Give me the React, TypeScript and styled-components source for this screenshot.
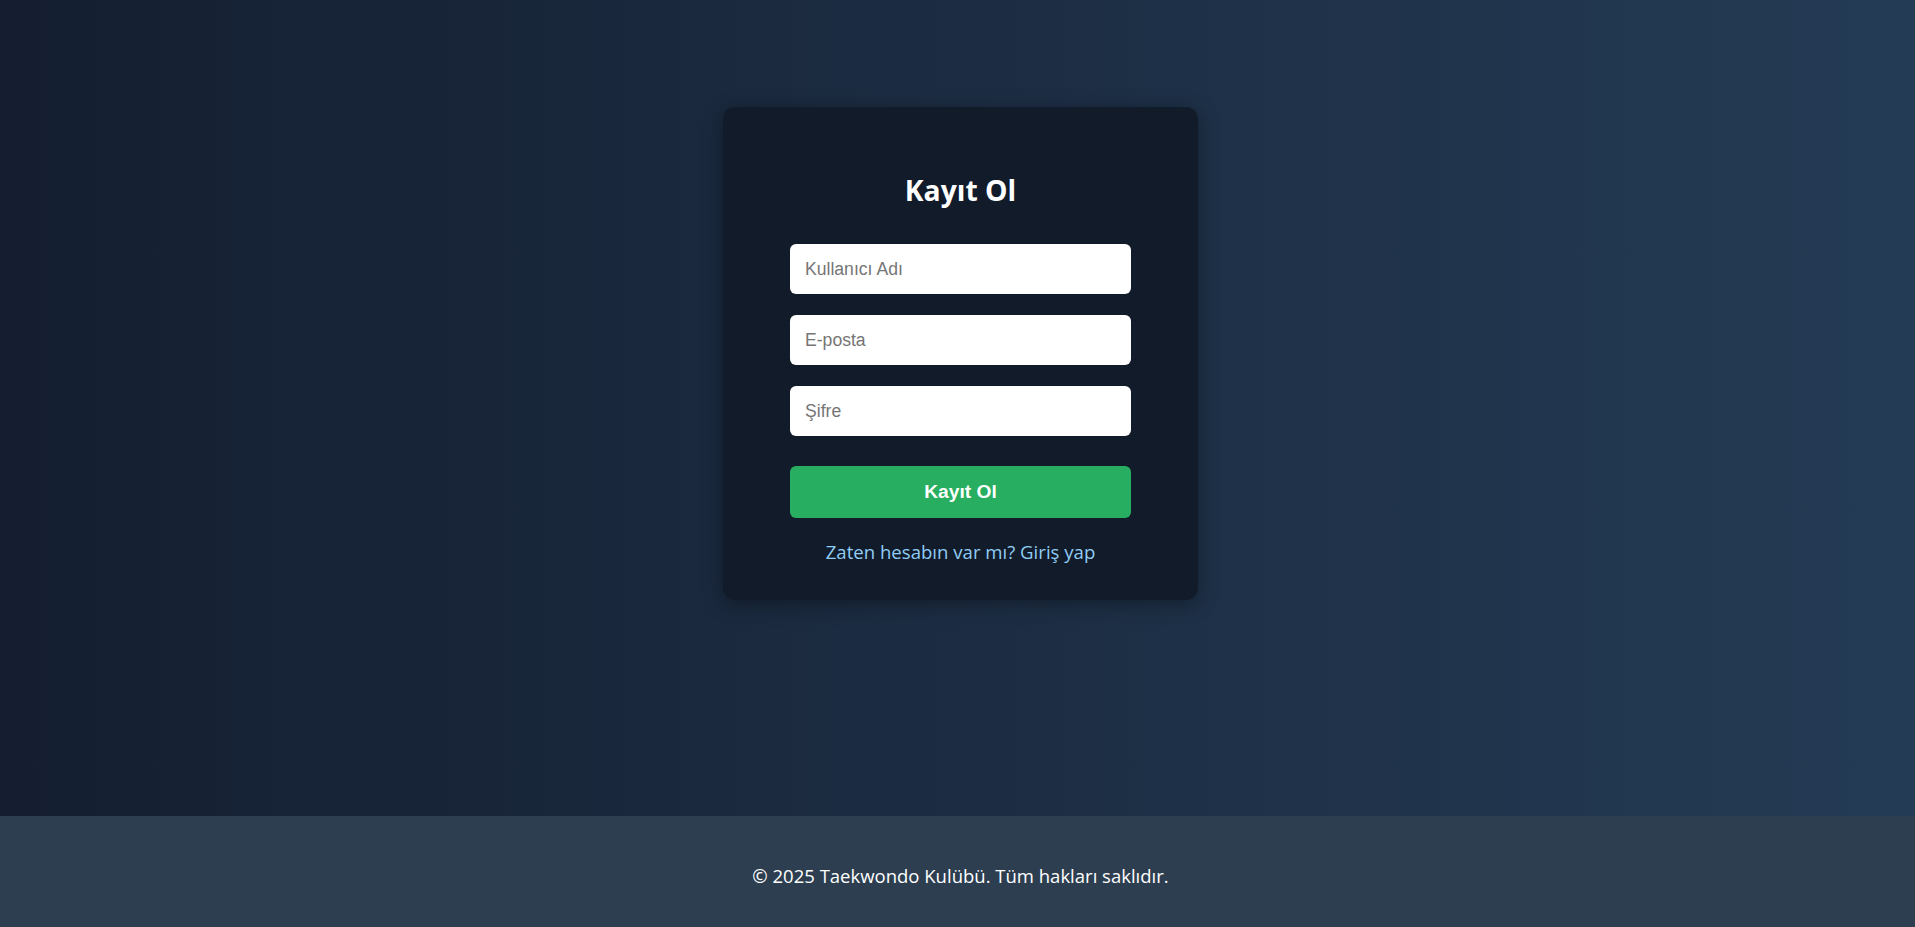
import React from "react";
import styled, { createGlobalStyle } from "styled-components";

const GlobalStyle = createGlobalStyle`
  * {
    box-sizing: border-box;
  }

  body {
    margin: 0;
    font-family: "Open Sans", "Noto Sans", sans-serif;
    background: linear-gradient(to right, #141e30, #243b55);
    color: #fff;
  }
`;

const Page = styled.div`
  min-height: 100vh;
  display: flex;
  flex-direction: column;
`;

const Main = styled.main`
  flex: 1;
  display: flex;
  justify-content: center;
  align-items: flex-start;
  padding: 107px 0 0 6px;
  min-height: 816px;
`;

const Card = styled.div`
  width: 475px;
  padding: 24px 67px 36px;
  background: #111b2a;
  border-radius: 12px;
  box-shadow: 0 4px 20px rgba(0, 0, 0, 0.35);
  text-align: center;
`;

const Title = styled.h2`
  margin: 40px 0 35px;
  font-size: 28.3px;
  line-height: 38px;
  font-weight: 700;
  color: #fff;
`;

const Form = styled.form`
  display: flex;
  flex-direction: column;
  gap: 21px;
`;

const Input = styled.input`
  height: 50px;
  width: 100%;
  padding: 0 15px;
  border: none;
  border-radius: 6px;
  background: #fff;
  font-family: "Liberation Sans", Arial, sans-serif;
  font-size: 17.6px;
  color: #222;
  outline: none;

  &::placeholder {
    color: #757575;
  }
`;

const SubmitButton = styled.button`
  height: 52px;
  margin-top: 9px;
  border: none;
  border-radius: 6px;
  background: #27ae60;
  color: #fff;
  font-family: "Liberation Sans", Arial, sans-serif;
  font-size: 19.2px;
  font-weight: 700;
  cursor: pointer;
`;

const SwitchLink = styled.a`
  display: block;
  margin-top: 22px;
  font-size: 18.6px;
  line-height: 24px;
  color: #90cdf4;
  text-decoration: none;
`;

const Footer = styled.footer`
  height: 111px;
  padding: 48px 0 0 6px;
  background: #2c3e50;
  text-align: center;
  font-size: 18.5px;
  line-height: 24px;
  color: #fff;
`;

const App = () => {
  return (
    <Page>
      <GlobalStyle />
      <Main>
        <Card>
          <Title>Kayıt Ol</Title>
          <Form onSubmit={(e) => e.preventDefault()}>
            <Input type="text" placeholder="Kullanıcı Adı" />
            <Input type="email" placeholder="E-posta" />
            <Input type="password" placeholder="Şifre" />
            <SubmitButton type="submit">Kayıt Ol</SubmitButton>
          </Form>
          <SwitchLink href="#">Zaten hesabın var mı? Giriş yap</SwitchLink>
        </Card>
      </Main>
      <Footer>© 2025 Taekwondo Kulübü. Tüm hakları saklıdır.</Footer>
    </Page>
  );
};

export default App;
